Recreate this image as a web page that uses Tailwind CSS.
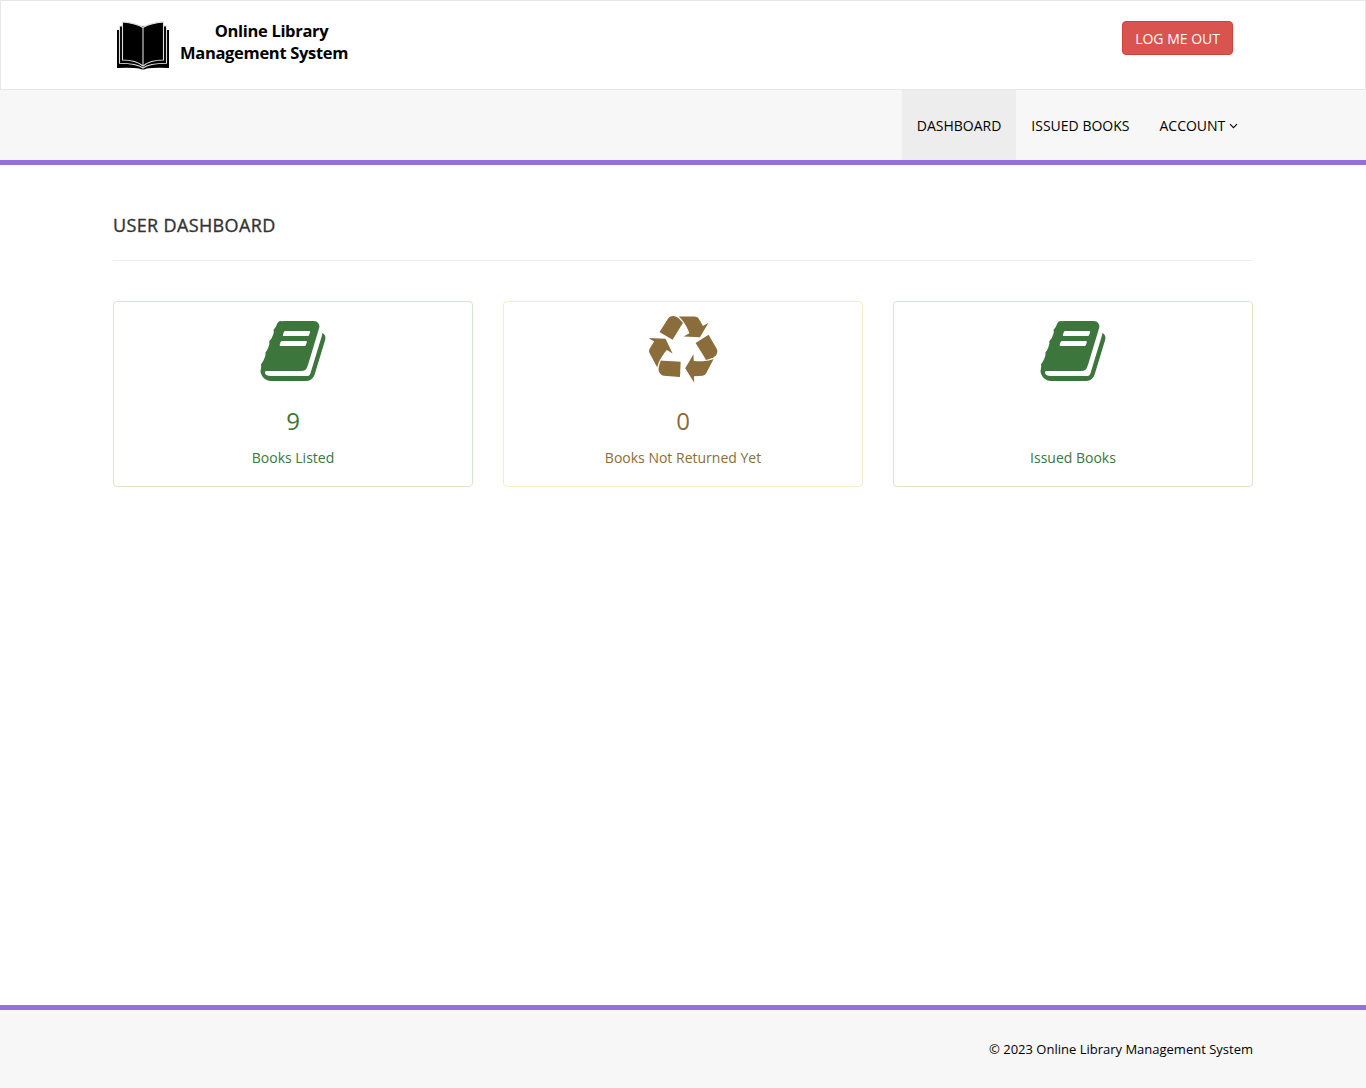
<!DOCTYPE html>
<html lang="en">
<head>
<meta charset="utf-8">
<title>Online Library Management System</title>
<script src="https://cdn.jsdelivr.net/npm/@tailwindcss/browser@4"></script>
</head>
<body class="flex min-h-screen flex-col bg-white font-['Open_Sans',sans-serif] text-sm leading-5 text-[#333]">
<svg class="hidden" aria-hidden="true">
  <symbol id="book" viewBox="0 0 1792 1792"><path fill="currentColor" d="M1703 478q40 57 18 129l-275 906q-19 64-76.500 107.500t-122.500 43.500h-923q-77 0-148.500-53.500t-99.500-131.500q-24-67-2-127 0-4 3-27t4-37q1-8-3-21.500t-3-19.500q2-11 8-21t16.500-23.500 16.500-23.500q23-38 45-91.500t30-91.500q3-10 .5-30t-.5-28q3-11 17-28t17-23q21-36 42-92t25-90q1-9-2.500-32t.5-28q4-13 22-30.500t22-22.500q19-26 42.500-84.500t27.500-96.500q1-8-3-25.500t-2-26.500q2-8 9-18t18-23 17-21q8-12 16.500-30.500t15-35 16-36 19.500-32 26.500-23.500 36-11.500 47.500 5.500l-1 3q38-9 51-9h761q74 0 114 56t18 130l-274 906q-36 119-71.500 153.500t-128.500 34.500h-869q-27 0-38 15-11 16-1 43 24 70 144 70h923q29 0 56-15.500t35-41.500l300-987q7-22 5-57 38 15 59 43zm-1064 2q-4 13 2 22.500t20 9.500h608q13 0 25.500-9.500t16.500-22.500l21-64q4-13-2-22.500t-20-9.500h-608q-13 0-25.500 9.500t-16.500 22.500zm-83 256q-4 13 2 22.500t20 9.500h608q13 0 25.500-9.500t16.500-22.500l21-64q4-13-2-22.500t-20-9.500h-608q-13 0-25.500 9.500t-16.500 22.500z"/></symbol>
  <symbol id="recycle" viewBox="0 0 1792 1792"><path fill="currentColor" d="M836 1169l-15 368-2 22-420-29q-36-3-67-31.500t-47-65.500q-11-27-14.500-55t4-65 12-55 21.500-64 19-53q78 12 509 28zm-387-586l180 379-147-92q-63 72-111.500 144.500t-72.500 125-39.500 94.500-18.500 63l-4 21-190-357q-17-26-18-56t6-47l8-18q35-63 114-188l-140-86zm1231 517l-188 359q-12 29-36.500 46.500t-43.500 20.500l-18 4q-71 7-219 12l8 164-230-367 211-362 7 173q170 16 283 5t170-33zm-785-924q-47 63-265 435l-317-187-19-12 225-356q20-31 60-45t80-10q24 2 48.500 12t42 21 41.500 33 36 34.500 36 39.500 32 35zm655 307l212 363q18 37 12.500 76t-27.500 74q-13 20-33 37t-38 28-48.500 22-47 16-51.500 14-46 12q-34-72-265-436l313-195zm-143-226l142-83-220 373-419-20 151-86q-34-89-75-166t-75.500-123.500-64.500-80-47-46.500l-17-13 405 1q31-3 58 10.500t39 28.500l11 15q39 61 112 190z"/></symbol>
</svg>

<header class="h-[90px] border border-[#e7e7e7] bg-white">
  <div class="mx-auto flex w-[1138px] items-start justify-between pt-5 pr-[19px]">
    <a class="flex text-black" href="#">
      <svg class="ml-[2px] h-[50px] w-[54px]" viewBox="0 0 54 50" stroke="#ddd" stroke-width="1.100">
        <path stroke="none" d="M1 9H53V47Q37 46.500 31 47.500Q27 49.500 23 47.500Q17 46.500 1 47Z"/>
        <path d="M3.500 5H50.500V42.300Q33 42.500 27 47Q21 42.500 3.500 42.300Z"/>
        <path d="M6.500 .9Q20 2 27 6.500Q34 2 47.500 .9V39Q34 39 27 45Q20 39 6.500 39Z"/>
        <path d="M27 6.500V45"/>
      </svg>
      <span class="-mt-px ml-[10px] w-[168px] text-center text-[16.500px] leading-[22px] font-bold tracking-[-0.31px] whitespace-nowrap"><span class="block pl-[15px]">Online Library</span><span class="block">Management System</span></span>
    </a>
    <a class="h-[34px] rounded-[4px] border border-[#d43f3a] bg-[#d9534f] px-3 py-[7px] text-white" href="#">LOG ME OUT</a>
  </div>
</header>
<nav class="h-[75px] border-b-[5px] border-[#9370db] bg-[#f7f7f7] text-black">
  <div class="mx-auto flex h-[70px] w-[1140px] justify-end">
    <a class="bg-[#ededed] px-[15px] pt-[26px]" href="#">DASHBOARD</a>
    <a class="px-[15px] pt-[26px]" href="#">ISSUED BOOKS</a>
    <a class="flex px-[15px] pt-[26px]" href="#">ACCOUNT<svg class="mt-[7px] ml-[3.700px] h-[6px] w-[9px]" viewBox="0 0 9 6" fill="none" stroke="currentColor" stroke-width="1.100"><path d="M1 1.200l3.500 3.500L8 1.200"/></svg></a>
  </div>
</nav>
<main class="mx-auto w-[1140px] flex-1 pt-[50px]">
  <h4 class="h-[46px] border-b border-[#eee] text-lg leading-5 font-normal tracking-[0.36px] [-webkit-text-stroke:0.35px_#333]">USER DASHBOARD</h4>
  <div class="mt-10 grid grid-cols-3 gap-[30px] text-center">
    <a class="flex h-[186px] flex-col items-center rounded-[4px] border border-[#d6e9c6] pt-[14px] text-[#3c763d]" href="#">
      <svg class="size-[70px]"><use href="#book"/></svg>
      <span class="mt-[22px] text-2xl leading-[26px]">9</span><span class="mt-[14px]">Books Listed</span>
    </a>
    <a class="flex h-[186px] flex-col items-center rounded-[4px] border border-[#faebcc] pt-[14px] text-[#8a6d3b]" href="#">
      <svg class="size-[70px]"><use href="#recycle"/></svg>
      <span class="mt-[22px] text-2xl leading-[26px]">0</span><span class="mt-[14px]">Books Not Returned Yet</span>
    </a>
    <a class="flex h-[186px] flex-col items-center rounded-[4px] border border-[#d6e9c6] pt-[14px] text-[#3c763d]" href="#">
      <svg class="size-[70px]"><use href="#book"/></svg>
      <span class="mt-[62px]">Issued Books</span>
    </a>
  </div>
</main>
<footer class="h-[83px] border-t-[5px] border-[#9370db] bg-[#f7f7f7] text-black">
  <div class="mx-auto w-[1140px] pt-[29px] text-right text-[13px]">© 2023 Online Library Management System</div>
</footer>
</body>
</html>
